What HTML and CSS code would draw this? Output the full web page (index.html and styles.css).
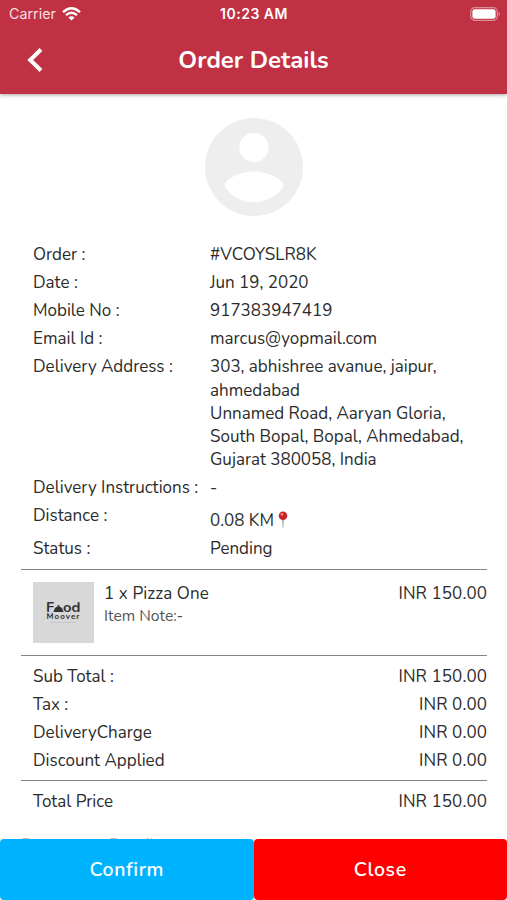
FILE: index.html
```html
<!DOCTYPE html>
<html lang="en">
<head>
<meta charset="utf-8">
<title>Order Details</title>
<link rel="stylesheet" href="styles.css">
</head>
<body>
<div class="screen">
  <header class="header">
    <div class="status">
      <div class="carrier"><span>Carrier</span>
        <svg width="19" height="14" viewBox="0 0 19 14" fill="none" stroke="#fff" stroke-width="2.3"><path d="M1 5.2Q9.500-2.700 18 5.200M4 8.200Q9.500 3.200 15 8.200"/><path d="M6.400 10.400Q9.500 7.900 12.600 10.400L9.500 13.500Z" fill="#fff" stroke="none"/></svg>
      </div>
      <time class="clock">10:23 AM</time>
      <svg class="battery" width="31" height="14" viewBox="0 0 31 14"><rect x=".7" y=".7" width="26.600" height="12.600" rx="3.800" fill="none" stroke="#fff" stroke-opacity=".45" stroke-width="1.200"/><rect x="2.400" y="2.200" width="23.200" height="9.600" rx="2.200" fill="#fff"/><path d="M28.700 4.800Q31 7 28.700 9.200Z" fill="#fff" fill-opacity=".5"/></svg>
    </div>
    <div class="bar">
      <svg class="back" width="16" height="24" viewBox="0 0 16 24" fill="none" stroke="#fff" stroke-width="4"><path d="M14 1.500L3.200 12L14 22.500"/></svg>
      <h1 class="title">Order Details</h1>
      <span></span>
    </div>
  </header>

  <main class="content">
    <svg class="avatar" width="98" height="98" viewBox="2 2 20 20" fill="#eee"><path d="M12 2a10 10 0 1 0 0 20 10 10 0 0 0 0-20zm0 3a3 3 0 1 1 0 6 3 3 0 0 1 0-6zm0 14.200c-2.500 0-4.710-1.280-6-3.220.03-1.990 4-3.080 6-3.080s5.970 1.090 6 3.080a7.200 7.200 0 0 1-6 3.220z"/></svg>

    <dl class="details">
      <dt>Order :</dt><dd>#VCOYSLR8K</dd>
      <dt>Date :</dt><dd>Jun 19, 2020</dd>
      <dt>Mobile No :</dt><dd>917383947419</dd>
      <dt>Email Id :</dt><dd>marcus@yopmail.com</dd>
      <dt>Delivery Address :</dt><dd class="address">303, abhishree avanue, jaipur,<br>ahmedabad<br>Unnamed Road, Aaryan Gloria,<br>South Bopal, Bopal, Ahmedabad,<br>Gujarat 380058, India</dd>
      <dt>Delivery Instructions :</dt><dd>-</dd>
      <dt>Distance :</dt><dd class="distance"><span>0.08 KM</span><svg width="10" height="17" viewBox="0 0 10 17"><path d="M4.300 8h1.400l-.4 8.500h-.6z" fill="#8e8e92"/><circle cx="5" cy="4.700" r="4.300" fill="#c8262e"/><circle cx="4" cy="3.400" r="1.300" fill="#ef8a86"/></svg></dd>
      <dt>Status :</dt><dd>Pending</dd>
    </dl>

    <section class="item">
      <svg class="thumb" width="61" height="61" viewBox="0 0 61 61"><rect width="61" height="61" fill="#d8d8d8"/><g fill="#333" font-weight="700"><text x="13" y="30" font-size="14.500">F</text><path d="M21 29a4.500 4.500 0 0 1 9 0zM20.500 29h10v1h-10z"/><circle cx="25.500" cy="24" r="1"/><text x="30" y="30" font-size="14.500" textLength="17.500" lengthAdjust="spacingAndGlyphs">od</text><text x="13.500" y="37.300" font-size="8" textLength="33">Moover</text></g><path d="M18 40.500h25" stroke="#c4c4c4" stroke-width=".8"/></svg>
      <div class="info"><p class="name">1 x Pizza One</p><p class="note">Item Note:-</p></div>
      <span class="price">INR 150.00</span>
    </section>

    <section class="totals">
      <div class="row"><span>Sub Total :</span><span class="price">INR 150.00</span></div>
      <div class="row"><span>Tax :</span><span class="price">INR 0.00</span></div>
      <div class="row"><span>DeliveryCharge</span><span class="price">INR 0.00</span></div>
      <div class="row"><span>Discount Applied</span><span class="price">INR 0.00</span></div>
    </section>
    <section class="grand">
      <div class="row"><span>Total Price</span><span class="price">INR 150.00</span></div>
    </section>
    <p class="more">Restaurant Details</p>
  </main>

  <footer class="actions">
    <button class="confirm">Confirm</button>
    <button class="close">Close</button>
  </footer>
</div>
</body>
</html>
```

FILE: styles.css
```css
* { box-sizing: border-box; }
body, h1, p, dl, dd { margin: 0; }
body {
  font-family: Nunito, Lato, "Noto Sans", sans-serif;
  font-size: 17px;
  line-height: 23px;
  color: #2b2b2b;
  background: #fff;
}
.screen { height: 900px; display: flex; flex-direction: column; overflow: hidden; }
.header { flex: none; height: 94px; background: #c03143; color: #fff; box-shadow: 0 1px 4px rgba(0, 0, 0, .35); }
.status {
  height: 27px;
  padding: 0 6px 0 9px;
  display: grid;
  grid-template-columns: 1fr auto 1fr;
  align-items: center;
  font: 14.300px/27px Inter, sans-serif;
}
.carrier { display: flex; align-items: center; gap: 6px; color: #f7dfe2; }
.clock { font-size: 14px; font-weight: 600; letter-spacing: .5px; position: relative; left: -1px; }
.battery { justify-self: end; }
.bar { height: 66px; padding: 0 27px; display: grid; grid-template-columns: 1fr auto 1fr; align-items: center; }
.title { font-size: 24px; line-height: 32px; font-weight: 700; }
.content { flex: 1; min-height: 0; overflow: hidden; padding: 24px 20px 0 21px; }
.avatar { display: block; margin: 0 auto; }
.details {
  margin-top: 24px;
  padding: 3px 12px 9px;
  display: grid;
  grid-template-columns: 177px 1fr;
  row-gap: 5.100px;
  border-bottom: 1px solid #858585;
}
.details dt, .details dd { white-space: nowrap; }
.details .address { line-height: 23.150px; }
.distance { display: flex; align-items: center; gap: 4px; padding-top: 5px; }
.distance svg { margin-top: -2px; }
.item { height: 86px; padding: 12px 0 0 12px; display: flex; border-bottom: 1px solid #858585; }
.thumb { flex: none; }
.info { flex: 1; padding-left: 10px; }
.name { letter-spacing: .12px; }
.price { letter-spacing: .1px; }
.note { font-size: 15.700px; color: #555; }
.totals { padding: 9px 0 8px 12px; display: grid; gap: 5px; border-bottom: 1px solid #858585; }
.row { display: flex; justify-content: space-between; }
.grand { padding: 9px 0 0 12px; }
.more { margin-top: 21px; color: #bbb; }
.actions { flex: none; height: 61px; display: grid; grid-template-columns: 1fr 1fr; }
.actions button {
  border: 0;
  border-radius: 4px;
  font: inherit;
  font-size: 19.500px;
  font-weight: 600;
  letter-spacing: .6px;
  color: #fff;
}
.confirm { background: #00b3ff; }
.close { background: #f00; }
```
